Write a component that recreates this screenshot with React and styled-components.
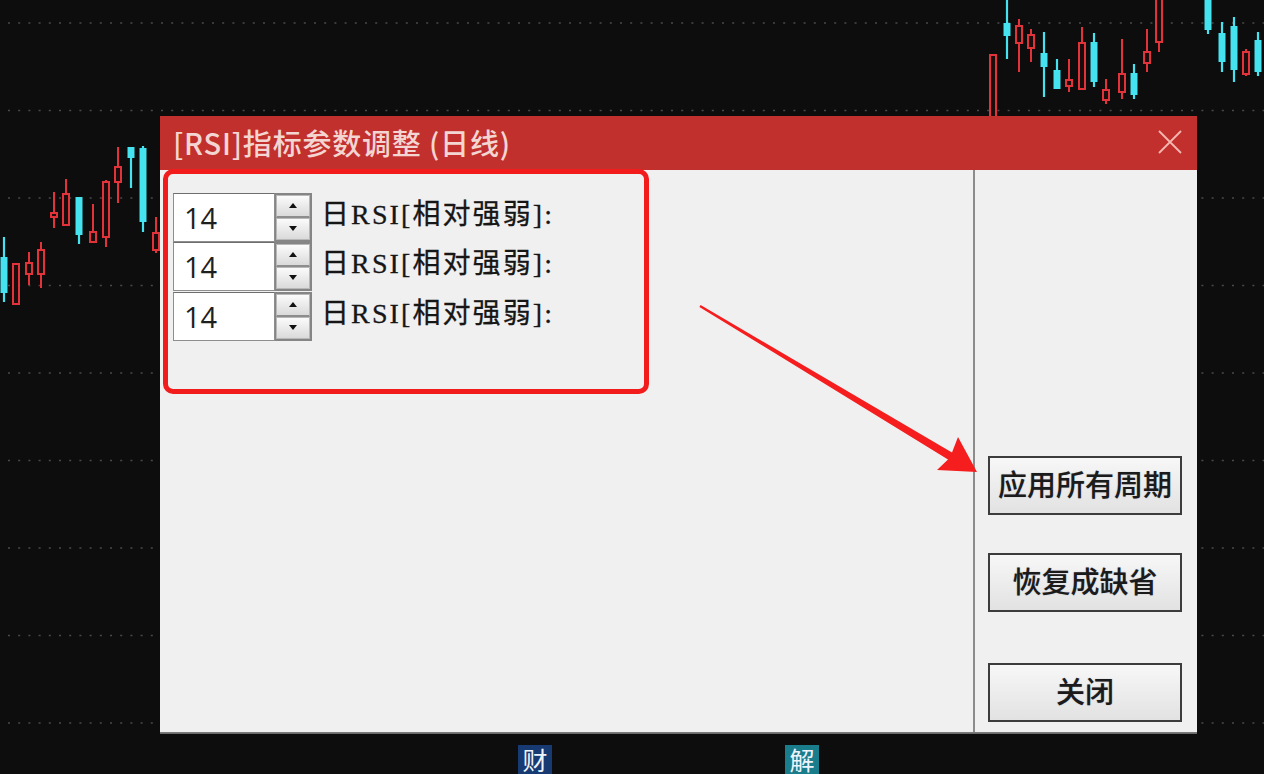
import React from "react";
import styled, { createGlobalStyle } from "styled-components";

const GlobalStyle = createGlobalStyle`
  html, body { margin: 0; padding: 0; background: #0e0d0d; }
  * { box-sizing: border-box; }
`;

const Screen = styled.div`
  position: relative;
  width: 1264px;
  height: 774px;
  overflow: hidden;
  background: #0e0d0d;
  padding: 116px 0 0 160px;
  font-family: "Noto Sans CJK SC", "Noto Sans", sans-serif;
`;

const ChartLayer = styled.svg`
  position: absolute;
  left: 0;
  top: 0;
  width: 1264px;
  height: 774px;
  z-index: 0;
`;

const OverlayLayer = styled.svg`
  position: absolute;
  left: 0;
  top: 0;
  width: 1264px;
  height: 774px;
  z-index: 3;
  pointer-events: none;
`;

const Dialog = styled.div`
  position: relative;
  z-index: 1;
  width: 1037px;
  height: 617px;
  display: flex;
  flex-direction: column;
  box-shadow: 0 1px 0 #6a6a6a;
`;

const TitleBar = styled.div`
  height: 54px;
  background: #c2302d;
  display: flex;
  align-items: center;
  justify-content: space-between;
  padding: 0 14px 2px 13px;
`;

const Title = styled.div`
  font-family: "Noto Sans CJK SC", sans-serif;
  font-size: 29px;
  font-weight: 500;
  line-height: 1;
  color: #f3d5d2;
  letter-spacing: 0.8px;
`;

const CloseButton = styled.button`
  width: 26px;
  height: 26px;
  padding: 0;
  border: 0;
  background: transparent;
  display: flex;
  align-items: center;
  justify-content: center;
`;

const Body = styled.div`
  flex: 1;
  display: flex;
  background: #f0f0f1;
  border-bottom: 1px solid #7a7a7a;
`;

const ParamPanel = styled.div`
  width: 815px;
  padding: 22px 0 0 13px;
  border-right: 2px solid #8c8c8c;
  display: flex;
  flex-direction: column;
`;

const ParamRow = styled.div`
  display: flex;
  align-items: center;
  height: 50px;
  margin-top: ${(p) => p.$mt || 0}px;
`;

const NumberBox = styled.div`
  width: 102px;
  height: 49px;
  background: #ffffff;
  border: 1px solid #8e8e8e;
  border-top-color: #6e6e6e;
  display: flex;
  align-items: center;
  padding-left: 10px;
  font-family: "Open Sans", "Liberation Sans", sans-serif;
  font-size: 29px;
  font-weight: 500;
  color: #1f1f1f;
`;

const Spinner = styled.div`
  width: 37px;
  height: 49px;
  display: flex;
  flex-direction: column;
  border: 2px solid #858585;
  border-left-width: 1px;
  background: #d8d8d8;
`;

const SpinHalf = styled.div`
  flex: 1;
  display: flex;
  align-items: center;
  justify-content: center;
  background: linear-gradient(#fbfbfb, #dadada);
  border: 1px solid #b8b8b8;
  &:first-child { border-bottom: 2px solid #8d8d8d; }
`;

const Tri = styled.span`
  width: 0;
  height: 0;
  border-left: 4px solid transparent;
  border-right: 4px solid transparent;
  ${(p) =>
    p.$down
      ? "border-top: 5px solid #111;"
      : "border-bottom: 5px solid #111;"}
`;

const ParamLabel = styled.div`
  margin-left: 9px;
  font-family: "Liberation Serif", "Noto Sans CJK SC", serif;
  font-size: 28px;
  color: #161616;
  letter-spacing: 2.1px;
  line-height: 1;
  padding-bottom: 4px;
  -webkit-text-stroke: 0.3px #161616;
`;

const ActionPanel = styled.div`
  flex: 1;
  display: flex;
  flex-direction: column;
  justify-content: flex-end;
  padding: 0 0 10px 13px;
`;

const ActionButton = styled.button`
  width: 194px;
  height: 59px;
  margin-top: ${(p) => p.$mt || 0}px;
  border: 2px solid #3c3c3c;
  background: linear-gradient(#f7f7f7, #e2e2e2);
  font-family: "Noto Sans CJK SC", sans-serif;
  font-size: 29px;
  font-weight: 500;
  color: #1b1b1b;
  padding: 0 0 4px 0;
  line-height: 1;
  text-shadow: 0 0 1px rgba(80, 80, 120, 0.5);
`;

const HighlightBox = styled.div`
  position: absolute;
  left: 163px;
  top: 169px;
  width: 486px;
  height: 225px;
  border: 5px solid #f31c1c;
  border-radius: 10px;
  z-index: 2;
  pointer-events: none;
`;

const Footer = styled.div`
  position: relative;
  z-index: 1;
  display: flex;
  margin-top: 12px;
`;

const Badge = styled.div`
  width: 34px;
  height: 29px;
  margin-left: ${(p) => p.$ml}px;
  background: ${(p) => p.$bg};
  color: #eef3fb;
  font-family: "Noto Sans CJK SC", sans-serif;
  font-size: 25px;
  line-height: 28px;
  text-align: center;
`;

const candles = [
  { x: 4, c: "g", wt: 237, wb: 302, bt: 257, bb: 293 },
  { x: 16, c: "r", wt: 264, wb: 304, bt: 264, bb: 304 },
  { x: 29, c: "r", wt: 252, wb: 285, bt: 263, bb: 274 },
  { x: 41, c: "r", wt: 242, wb: 288, bt: 250, bb: 274 },
  { x: 54, c: "r", wt: 192, wb: 228, bt: 213, bb: 217 },
  { x: 66, c: "r", wt: 179, wb: 226, bt: 194, bb: 225 },
  { x: 79, c: "g", wt: 197, wb: 244, bt: 197, bb: 235 },
  { x: 93, c: "r", wt: 204, wb: 242, bt: 232, bb: 242 },
  { x: 106, c: "r", wt: 180, wb: 247, bt: 182, bb: 237 },
  { x: 118, c: "r", wt: 147, wb: 203, bt: 167, bb: 182 },
  { x: 131, c: "g", wt: 147, wb: 188, bt: 147, bb: 158 },
  { x: 143, c: "g", wt: 146, wb: 232, bt: 148, bb: 222 },
  { x: 156, c: "r", wt: 217, wb: 253, bt: 233, bb: 250 },
  { x: 993, c: "r", wt: 55, wb: 130, bt: 55, bb: 130 },
  { x: 1007, c: "g", wt: 0, wb: 59, bt: 23, bb: 36 },
  { x: 1019, c: "r", wt: 19, wb: 72, bt: 26, bb: 43 },
  { x: 1031, c: "r", wt: 29, wb: 62, bt: 35, bb: 48 },
  { x: 1044, c: "g", wt: 32, wb: 97, bt: 53, bb: 67 },
  { x: 1057, c: "g", wt: 59, wb: 89, bt: 70, bb: 89 },
  { x: 1069, c: "r", wt: 59, wb: 92, bt: 80, bb: 86 },
  { x: 1082, c: "r", wt: 27, wb: 89, bt: 43, bb: 89 },
  { x: 1094, c: "g", wt: 33, wb: 87, bt: 42, bb: 82 },
  { x: 1106, c: "r", wt: 79, wb: 104, bt: 90, bb: 100 },
  { x: 1122, c: "r", wt: 39, wb: 99, bt: 74, bb: 92 },
  { x: 1134, c: "g", wt: 64, wb: 99, bt: 73, bb: 95 },
  { x: 1147, c: "r", wt: 29, wb: 72, bt: 52, bb: 63 },
  { x: 1159, c: "r", wt: -5, wb: 52, bt: -5, bb: 42 },
  { x: 1208, c: "g", wt: -5, wb: 34, bt: -5, bb: 30 },
  { x: 1222, c: "g", wt: 22, wb: 72, bt: 33, bb: 62 },
  { x: 1234, c: "g", wt: 17, wb: 82, bt: 26, bb: 70 },
  { x: 1246, c: "r", wt: 49, wb: 76, bt: 52, bb: 74 },
  { x: 1258, c: "g", wt: 32, wb: 76, bt: 40, bb: 72 },
];

const gridYs = [23, 110.5, 198, 285.5, 373, 460.5, 548, 635.5, 723];

const RED = "#e2333b";
const CYAN = "#45e2ef";

function Candle({ x, c, wt, wb, bt, bb }) {
  if (c === "g") {
    return (
      <g>
        <line x1={x} y1={wt} x2={x} y2={wb} stroke={CYAN} strokeWidth="2.2" />
        <rect x={x - 3.5} y={bt} width="7" height={Math.max(bb - bt, 2)} fill={CYAN} />
      </g>
    );
  }
  return (
    <g>
      <line x1={x} y1={wt} x2={x} y2={bt} stroke={RED} strokeWidth="2" />
      <line x1={x} y1={bb} x2={x} y2={wb} stroke={RED} strokeWidth="2" />
      <rect
        x={x - 3}
        y={bt}
        width="6"
        height={Math.max(bb - bt, 2)}
        fill="#1a0d0e"
        stroke={RED}
        strokeWidth="2"
      />
    </g>
  );
}

function Chart() {
  return (
    <ChartLayer viewBox="0 0 1264 774">
      {gridYs.map((y) => (
        <line
          key={y}
          x1="8"
          y1={y}
          x2="1264"
          y2={y}
          stroke="#4a4a4a"
          strokeWidth="1.6"
          strokeDasharray="2 8.2"
        />
      ))}
      {candles.map((k) => (
        <Candle key={k.x} {...k} />
      ))}
    </ChartLayer>
  );
}

function Arrow() {
  return (
    <OverlayLayer viewBox="0 0 1264 774">
      <polygon
        points="699.4,306.9 700.6,305.1 952,452.4 958,437 977,472 937,470 948,459.6"
        fill="#f51d1d"
      />
    </OverlayLayer>
  );
}

function ParamInput({ value, mt }) {
  return (
    <ParamRow $mt={mt}>
      <NumberBox>{value}</NumberBox>
      <Spinner>
        <SpinHalf>
          <Tri />
        </SpinHalf>
        <SpinHalf>
          <Tri $down />
        </SpinHalf>
      </Spinner>
      <ParamLabel>日RSI[相对强弱]:</ParamLabel>
    </ParamRow>
  );
}

export default function App() {
  return (
    <>
      <GlobalStyle />
      <Screen>
        <Chart />
        <Dialog>
          <TitleBar>
            <Title>[RSI]指标参数调整 (日线)</Title>
            <CloseButton aria-label="关闭">
              <svg width="24" height="24" viewBox="0 0 24 24">
                <path d="M1 1 L23 23 M23 1 L1 23" stroke="#f5b7b0" strokeWidth="1.8" />
              </svg>
            </CloseButton>
          </TitleBar>
          <Body>
            <ParamPanel>
              <ParamInput value="14" />
              <ParamInput value="14" mt={-1} />
              <ParamInput value="14" />
            </ParamPanel>
            <ActionPanel>
              <ActionButton>应用所有周期</ActionButton>
              <ActionButton $mt={38}>恢复成缺省</ActionButton>
              <ActionButton $mt={51}>关闭</ActionButton>
            </ActionPanel>
          </Body>
        </Dialog>
        <Footer>
          <Badge $ml={358} $bg="#173a72">财</Badge>
          <Badge $ml={233} $bg="#1a7d8c">解</Badge>
        </Footer>
        <HighlightBox />
        <Arrow />
      </Screen>
    </>
  );
}
